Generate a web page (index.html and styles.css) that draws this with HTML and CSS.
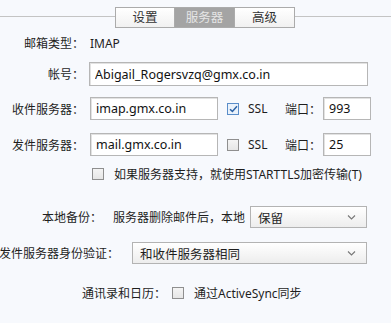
FILE: index.html
```html
<!DOCTYPE html>
<html lang="zh-CN">
<head>
    <meta charset="UTF-8">
    <title>账户设置</title>
    <link rel="stylesheet" href="styles.css">
</head>
<body>
    <div class="tabbar">
        <div class="tabs">
            <div class="tab">设置</div>
            <div class="tab active">服务器</div>
            <div class="tab">高级</div>
        </div>
    </div>

    <div class="row row-type">
        <span class="label">邮箱类型<span class="colon">：</span></span>
        <span class="value">IMAP</span>
    </div>

    <div class="row row-account">
        <span class="label">帐号<span class="colon">：</span></span>
        <input class="field wide" type="text" value="Abigail_Rogersvzq@gmx.co.in">
    </div>

    <div class="row row-in">
        <span class="label">收件服务器<span class="colon">：</span></span>
        <input class="field host" type="text" value="imap.gmx.co.in">
        <span class="check checked">
            <svg width="9" height="8" viewBox="0 0 9 8"><path d="M1 4.2 L3.4 6.4 L8 1.2" fill="none" stroke="#2d63a6" stroke-width="1.5"/></svg>
        </span>
        <span class="ssl">SSL</span>
        <span class="port-label">端口<span class="colon">：</span></span>
        <input class="field port" type="text" value="993">
    </div>

    <div class="row row-out">
        <span class="label">发件服务器<span class="colon">：</span></span>
        <input class="field host" type="text" value="mail.gmx.co.in">
        <span class="check"></span>
        <span class="ssl">SSL</span>
        <span class="port-label">端口<span class="colon">：</span></span>
        <input class="field port" type="text" value="25">
    </div>

    <div class="row row-tls">
        <span class="check"></span>
        <span class="tls-text">如果服务器支持<span class="colon">，</span>就使用STARTTLS加密传输(T)</span>
    </div>

    <div class="row row-backup">
        <span class="label label-backup">本地备份<span class="colon">：</span></span>
        <span class="backup-text">服务器删除邮件后<span class="colon">，</span>本地</span>
        <div class="select select-keep">
            <span>保留</span>
            <svg width="9" height="5" viewBox="0 0 9 5"><path d="M1 0.5 L4.5 4 L8 0.5" fill="none" stroke="#777" stroke-width="1.1"/></svg>
        </div>
    </div>

    <div class="row row-auth">
        <span class="label label-auth">发件服务器身份验证<span class="colon">：</span></span>
        <div class="select select-auth">
            <span>和收件服务器相同</span>
            <svg width="9" height="5" viewBox="0 0 9 5"><path d="M1 0.5 L4.5 4 L8 0.5" fill="none" stroke="#777" stroke-width="1.1"/></svg>
        </div>
    </div>

    <div class="row row-sync">
        <span class="label label-sync">通讯录和日历<span class="colon">：</span></span>
        <span class="check"></span>
        <span class="sync-text">通过ActiveSync同步</span>
    </div>
</body>
</html>
```

FILE: styles.css
```css
body {
    margin: 0;
    background-color: #f7f9fd;
    font-family: "Noto Sans", "Noto Sans CJK SC", sans-serif;
    font-size: 12px;
    color: #1e1e1e;
    width: 391px;
    height: 323px;
    overflow: hidden;
}

/* full-width punctuation sits centred in its cell, as in the original UI */
.colon {
    font-family: "Noto Sans CJK TC", sans-serif;
}

/* tab strip */
.tabbar {
    position: relative;
    height: 28px;
}
.tabbar::before {
    content: "";
    position: absolute;
    left: 0;
    right: 0;
    top: 16px;
    border-top: 1px solid #c4c4c4;
}
.tabs {
    position: relative;
    display: flex;
    margin-left: 115px;
    padding-top: 7px;
}
.tab {
    width: 58px;
    height: 19px;
    line-height: 19px;
    text-align: center;
    border: 1px solid #ababab;
    background: linear-gradient(#ffffff, #f1f1f1);
    color: #333;
    font-size: 12.5px;
}
.tab + .tab {
    border-left: none;
    width: 59px;
}
.tab.active {
    background: #a4a4a4;
    color: #e6e6e6;
}

/* rows */
.row {
    display: flex;
    align-items: center;
}
.label {
    width: 84px;
    flex-shrink: 0;
    text-align: right;
    white-space: nowrap;
}
.row-type {
    margin-top: 7px;
    height: 16px;
}
.row-type .value {
    margin-left: 6px;
}
.row-account {
    margin-top: 11px;
    height: 24px;
}
.row-in {
    margin-top: 11px;
    height: 23px;
}
.row-out {
    margin-top: 13px;
    height: 23px;
}
.row-tls {
    margin-top: 10px;
    height: 16px;
    padding-left: 92px;
}
.row-backup {
    margin-top: 24px;
    height: 22px;
}
.row-auth {
    margin-top: 14px;
    height: 22px;
}
.row-sync {
    margin-top: 21px;
    height: 16px;
}

/* inputs */
.field {
    box-sizing: border-box;
    height: 100%;
    margin: 0 0 0 5px;
    padding: 0 5px;
    border: 1px solid #b6b6b6;
    box-shadow: inset 1px 1px 0 #e2e2e2;
    background: #fff;
    font-family: "Noto Sans", "Noto Sans CJK SC", sans-serif;
    font-size: 12.5px;
    color: #111;
    outline: none;
}
.field.wide {
    width: 279px;
}
.field.host {
    width: 128px;
    margin-left: 6px;
}
.field.port {
    width: 48px;
    margin-left: 2px;
}

/* checkboxes */
.check {
    box-sizing: border-box;
    width: 12px;
    height: 12px;
    flex-shrink: 0;
    border: 1px solid #8f8f8f;
    background: linear-gradient(#f4f4f4, #e6e6e6);
    display: flex;
    align-items: center;
    justify-content: center;
}
.check.checked {
    border-color: #5a8dc9;
    background: #eaf2fb;
}
.row-in .check,
.row-out .check {
    margin-left: 9px;
}
.ssl {
    margin-left: 9px;
    width: 37px;
}
.port-label {
    white-space: nowrap;
}
.tls-text {
    margin-left: 10px;
    white-space: nowrap;
}

/* selects */
.select {
    box-sizing: border-box;
    height: 100%;
    display: flex;
    align-items: center;
    justify-content: space-between;
    padding: 0 10px 0 7px;
    border: 1px solid #b3b3b3;
    background: linear-gradient(#ffffff, #ededed);
    font-size: 12.5px;
}
.label-backup {
    width: 102px;
}
.backup-text {
    margin-left: 11px;
    white-space: nowrap;
}
.select-keep {
    width: 117px;
    margin-left: 5px;
}
.label-auth {
    width: 120px;
    margin-left: -1px;
}
.select-auth {
    width: 235px;
    margin-left: 13px;
}
.label-sync {
    width: 166px;
}
.row-sync .check {
    margin-left: 6px;
}
.sync-text {
    margin-left: 10px;
    white-space: nowrap;
}
```
